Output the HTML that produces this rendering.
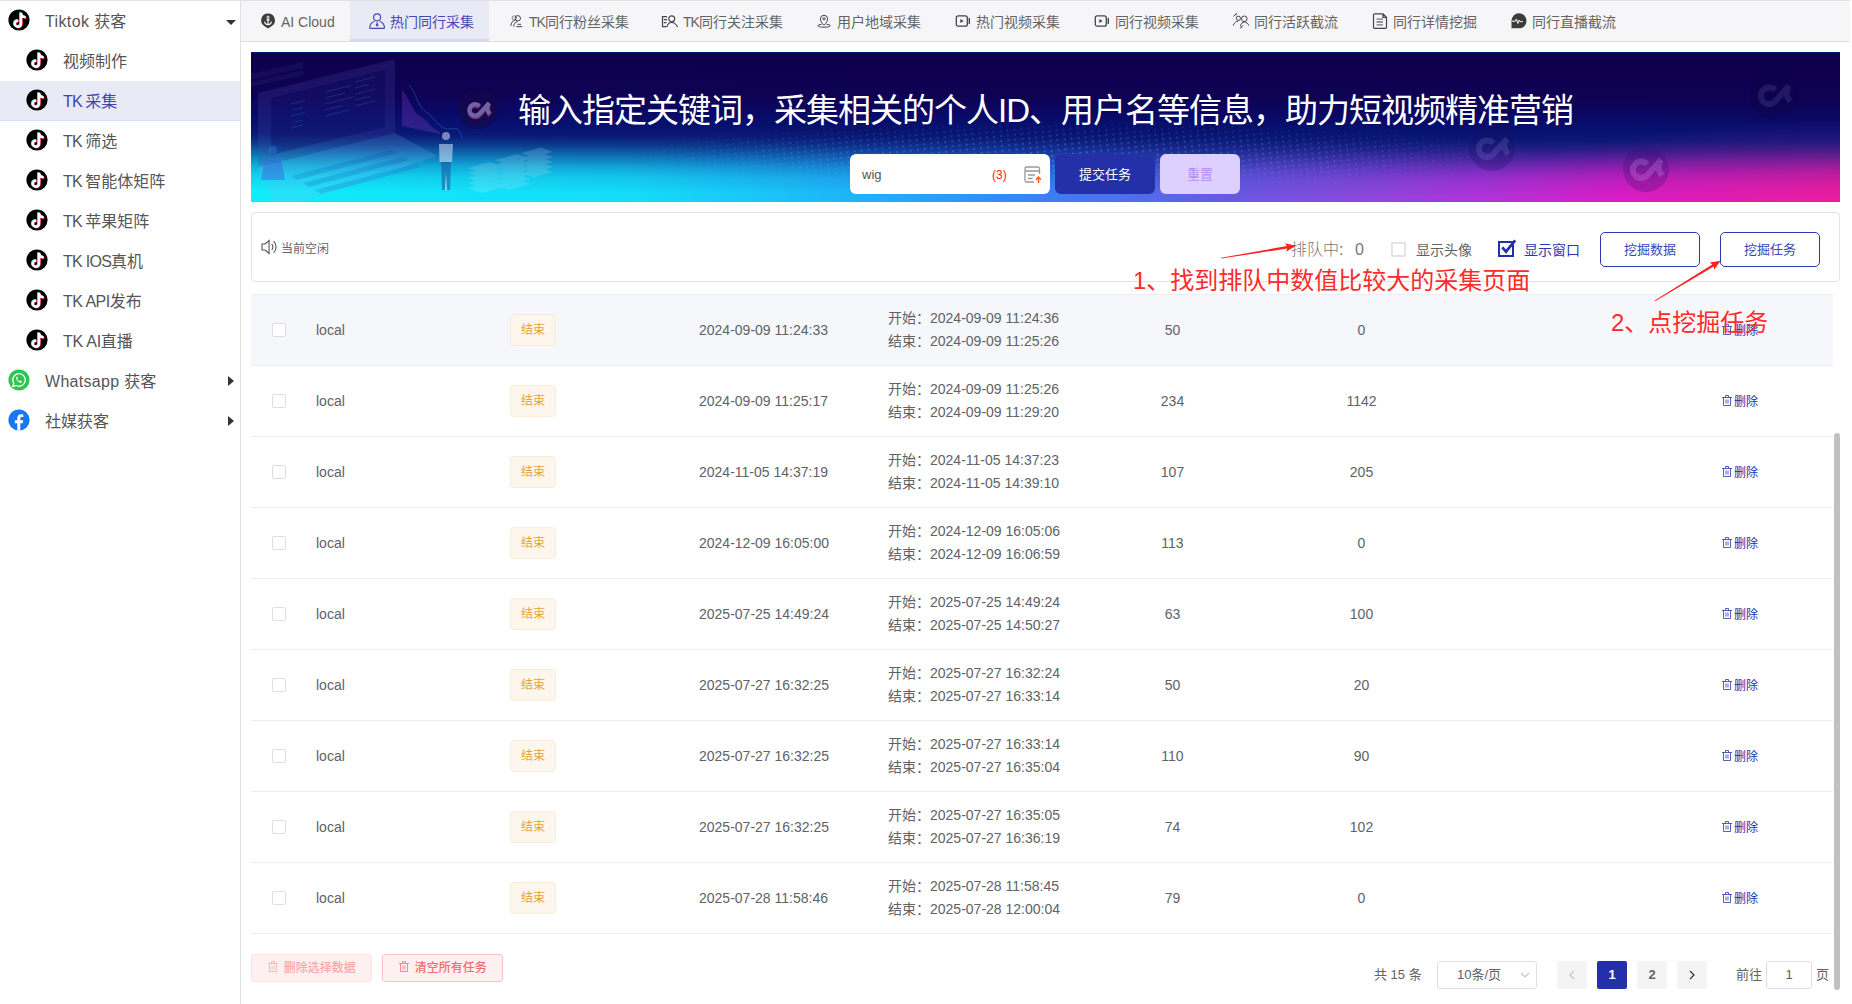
<!DOCTYPE html>
<html lang="zh-CN">
<head>
<meta charset="utf-8">
<title>TK 采集</title>
<style>
*{box-sizing:border-box;margin:0;padding:0}
html,body{width:1852px;height:1004px;overflow:hidden;background:#fff}
body{font-family:"Liberation Sans","Noto Sans CJK SC",sans-serif;color:#606266;position:relative;font-size:14px}
i{font-style:normal;display:block}
b{font-weight:400;display:block}
/* sidebar */
#side{position:absolute;left:0;top:0;width:241px;height:1004px;border-right:1px solid #e0e0e2;border-top:1px solid #e4e4e4;background:#fff}
.mi{position:absolute;left:0;width:240px;height:40px;line-height:42px;font-size:16px;color:#555;white-space:nowrap}
.mi .ic{position:absolute;top:8px;width:22px;height:22px}
.mi .tx{position:absolute;top:0}
.mi.top .ic{left:8px}
.mi.top .tx{left:45px}
.mi.sub .ic{left:26px}
.mi.sub .tx{left:63px}
.mi.act{background:#e8eaf6;color:#3f44b0;border-bottom:1px solid #d9dcf0}
.caret-d{position:absolute;left:226px;top:19px;width:0;height:0;border-left:5px solid transparent;border-right:5px solid transparent;border-top:5px solid #333}
.caret-r{position:absolute;left:228px;top:15px;width:0;height:0;border-top:5px solid transparent;border-bottom:5px solid transparent;border-left:6px solid #333}
/* tabs */
#tabs{position:absolute;left:241px;top:0;width:1609px;height:42px;background:#f6f6f8;border-bottom:1px solid #e0e0e2;border-top:1px solid #e2e2e4}
.tab{position:absolute;top:0;height:40px;line-height:43px;font-size:14px;color:#646464;white-space:nowrap}
.tab svg{position:absolute;top:12px;width:16px;height:16px;color:#444;overflow:visible}
.tab.act{background:#e8eaf6;color:#4549b5;border-bottom:2px solid #d5d9f0}
.tab.act svg{color:#4549b5}
/* banner */
#banner{position:absolute;left:251px;top:52px;width:1589px;height:150px;overflow:hidden;background:#0b0050}
#banner h1{position:absolute;left:0;right:0;top:34.500px;text-align:center;font-weight:400;font-size:33px;letter-spacing:-1px;color:#fff;line-height:48px;white-space:nowrap}
#kw{position:absolute;left:599px;top:102px;width:200px;height:40px;background:#fff;border-radius:6px}
#kw span{position:absolute;line-height:42px}
#sub{position:absolute;left:804px;top:102px;width:100px;height:40px;border-radius:6px;background:#2330a8;color:#fff;font-size:13px;line-height:41px;text-align:center}
#rst{position:absolute;left:909px;top:102px;width:80px;height:40px;border-radius:6px;background:#ddd0ff;color:#b48cf5;font-size:13px;line-height:41px;text-align:center}
/* toolbar */
#tool{position:absolute;left:251px;top:212px;width:1589px;height:70px;border:1px solid #e2e3e6;border-radius:4px;background:#fff}
#tool span{position:absolute;white-space:nowrap}
.obtn{position:absolute;top:19px;width:100px;height:35px;border:1px solid #2b39b0;border-radius:5px;color:#3a46b5;font-size:13px;line-height:33px;text-align:center;background:#fff}
.note{position:absolute;z-index:5;color:#ff2a2a;font-size:24px;line-height:30px;white-space:nowrap}
/* table */
.row{position:absolute;left:251px;width:1582px;height:71px;border-bottom:1px solid #ebeef5;font-size:14px;color:#606266}
.row.hv{background:#f5f7fa}
#tline{position:absolute;left:251px;top:294px;width:1582px;height:1px;background:#ebeef5}
.row span{position:absolute;white-space:nowrap;line-height:20px}
.cb{position:absolute;left:21px;top:28px;width:14px;height:14px;border:1px solid #dcdfe6;border-radius:2px;background:#fff}
.tag{position:absolute;left:259px;top:19px;width:46px;height:32px;line-height:30px;border:1px solid #faecd8;background:#fdf6ec;color:#e6a23c;font-size:12px;text-align:center;border-radius:4px}
.c1{left:65px;top:25px}
.c3{left:448px;top:25px}
.c4a{left:637px;top:13px}
.c4b{left:637px;top:36px}
.c5{left:871.500px;width:100px;text-align:center;top:25px}
.c6{left:1060.500px;width:100px;text-align:center;top:25px}
.del{left:1470px;top:26px;font-size:12px;color:#2330a8}
.tr{display:inline-block;width:12px;height:12px;vertical-align:-1px;margin-right:1px}
.sbar{position:absolute;left:1834px;top:433px;width:6px;height:557px;border-radius:3px;background:#c1c1c1}
/* footer */
.dbtn{position:absolute;top:954px;height:28px;width:121px;border-radius:3px;font-size:12px;font-weight:500;line-height:27px;text-align:center;background:#fef0f0;white-space:nowrap}
#pg span,#pg b,#pg i{position:absolute;white-space:nowrap}
#pg{position:absolute;left:0;top:0;font-size:13px;color:#606266}
.pb{top:961px;width:30px;height:28px;border-radius:2px;background:#f4f4f5;text-align:center;line-height:28px;font-weight:700;font-size:13px;color:#606266}
</style>
</head>
<body>
<div id="side">
<div class="mi top" style="top:0px"><svg class="ic" viewBox="0 0 22 22"><circle cx="11" cy="11" r="10.6" fill="#000"/><g fill="none" stroke-linecap="butt"><path d="M13 3.800v10.900a3.100 3.100 0 1 1-2.800-3.100M13 4.200c.3 2.500 2 4 4.700 4.200" stroke="#25f4ee" stroke-width="2.400" transform="translate(-.7 -.5)"/><path d="M13 3.800v10.900a3.100 3.100 0 1 1-2.800-3.100M13 4.200c.3 2.500 2 4 4.700 4.200" stroke="#fe2c55" stroke-width="2.400" transform="translate(.6 .5)"/><path d="M13 3.800v10.900a3.100 3.100 0 1 1-2.800-3.100M13 4.200c.3 2.500 2 4 4.700 4.200" stroke="#fff" stroke-width="2.400"/></g></svg><span class="tx"><span style="letter-spacing:0.37px">Tiktok </span>获客</span><i class="caret-d"></i></div>
<div class="mi sub" style="top:40px"><svg class="ic" viewBox="0 0 22 22"><circle cx="11" cy="11" r="10.6" fill="#000"/><g fill="none" stroke-linecap="butt"><path d="M13 3.800v10.900a3.100 3.100 0 1 1-2.800-3.100M13 4.200c.3 2.500 2 4 4.700 4.200" stroke="#25f4ee" stroke-width="2.400" transform="translate(-.7 -.5)"/><path d="M13 3.800v10.900a3.100 3.100 0 1 1-2.800-3.100M13 4.200c.3 2.500 2 4 4.700 4.200" stroke="#fe2c55" stroke-width="2.400" transform="translate(.6 .5)"/><path d="M13 3.800v10.900a3.100 3.100 0 1 1-2.800-3.100M13 4.200c.3 2.500 2 4 4.700 4.200" stroke="#fff" stroke-width="2.400"/></g></svg><span class="tx">视频制作</span></div>
<div class="mi sub act" style="top:80px"><svg class="ic" viewBox="0 0 22 22"><circle cx="11" cy="11" r="10.6" fill="#000"/><g fill="none" stroke-linecap="butt"><path d="M13 3.800v10.900a3.100 3.100 0 1 1-2.800-3.100M13 4.200c.3 2.500 2 4 4.700 4.200" stroke="#25f4ee" stroke-width="2.400" transform="translate(-.7 -.5)"/><path d="M13 3.800v10.900a3.100 3.100 0 1 1-2.800-3.100M13 4.200c.3 2.500 2 4 4.700 4.200" stroke="#fe2c55" stroke-width="2.400" transform="translate(.6 .5)"/><path d="M13 3.800v10.900a3.100 3.100 0 1 1-2.800-3.100M13 4.200c.3 2.500 2 4 4.700 4.200" stroke="#fff" stroke-width="2.400"/></g></svg><span class="tx"><span style="letter-spacing:-0.87px">TK </span>采集</span></div>
<div class="mi sub" style="top:120px"><svg class="ic" viewBox="0 0 22 22"><circle cx="11" cy="11" r="10.6" fill="#000"/><g fill="none" stroke-linecap="butt"><path d="M13 3.800v10.900a3.100 3.100 0 1 1-2.800-3.100M13 4.200c.3 2.500 2 4 4.700 4.200" stroke="#25f4ee" stroke-width="2.400" transform="translate(-.7 -.5)"/><path d="M13 3.800v10.900a3.100 3.100 0 1 1-2.800-3.100M13 4.200c.3 2.500 2 4 4.700 4.200" stroke="#fe2c55" stroke-width="2.400" transform="translate(.6 .5)"/><path d="M13 3.800v10.900a3.100 3.100 0 1 1-2.800-3.100M13 4.200c.3 2.500 2 4 4.700 4.200" stroke="#fff" stroke-width="2.400"/></g></svg><span class="tx"><span style="letter-spacing:-0.87px">TK </span>筛选</span></div>
<div class="mi sub" style="top:160px"><svg class="ic" viewBox="0 0 22 22"><circle cx="11" cy="11" r="10.6" fill="#000"/><g fill="none" stroke-linecap="butt"><path d="M13 3.800v10.900a3.100 3.100 0 1 1-2.800-3.100M13 4.200c.3 2.500 2 4 4.700 4.200" stroke="#25f4ee" stroke-width="2.400" transform="translate(-.7 -.5)"/><path d="M13 3.800v10.900a3.100 3.100 0 1 1-2.800-3.100M13 4.200c.3 2.500 2 4 4.700 4.200" stroke="#fe2c55" stroke-width="2.400" transform="translate(.6 .5)"/><path d="M13 3.800v10.900a3.100 3.100 0 1 1-2.800-3.100M13 4.200c.3 2.500 2 4 4.700 4.200" stroke="#fff" stroke-width="2.400"/></g></svg><span class="tx"><span style="letter-spacing:-0.87px">TK </span>智能体矩阵</span></div>
<div class="mi sub" style="top:200px"><svg class="ic" viewBox="0 0 22 22"><circle cx="11" cy="11" r="10.6" fill="#000"/><g fill="none" stroke-linecap="butt"><path d="M13 3.800v10.900a3.100 3.100 0 1 1-2.800-3.100M13 4.200c.3 2.500 2 4 4.700 4.200" stroke="#25f4ee" stroke-width="2.400" transform="translate(-.7 -.5)"/><path d="M13 3.800v10.900a3.100 3.100 0 1 1-2.800-3.100M13 4.200c.3 2.500 2 4 4.700 4.200" stroke="#fe2c55" stroke-width="2.400" transform="translate(.6 .5)"/><path d="M13 3.800v10.900a3.100 3.100 0 1 1-2.800-3.100M13 4.200c.3 2.500 2 4 4.700 4.200" stroke="#fff" stroke-width="2.400"/></g></svg><span class="tx"><span style="letter-spacing:-0.87px">TK </span>苹果矩阵</span></div>
<div class="mi sub" style="top:240px"><svg class="ic" viewBox="0 0 22 22"><circle cx="11" cy="11" r="10.6" fill="#000"/><g fill="none" stroke-linecap="butt"><path d="M13 3.800v10.900a3.100 3.100 0 1 1-2.800-3.100M13 4.200c.3 2.500 2 4 4.700 4.200" stroke="#25f4ee" stroke-width="2.400" transform="translate(-.7 -.5)"/><path d="M13 3.800v10.900a3.100 3.100 0 1 1-2.800-3.100M13 4.200c.3 2.500 2 4 4.700 4.200" stroke="#fe2c55" stroke-width="2.400" transform="translate(.6 .5)"/><path d="M13 3.800v10.900a3.100 3.100 0 1 1-2.800-3.100M13 4.200c.3 2.500 2 4 4.700 4.200" stroke="#fff" stroke-width="2.400"/></g></svg><span class="tx"><span style="letter-spacing:-0.73px">TK IOS</span>真机</span></div>
<div class="mi sub" style="top:280px"><svg class="ic" viewBox="0 0 22 22"><circle cx="11" cy="11" r="10.6" fill="#000"/><g fill="none" stroke-linecap="butt"><path d="M13 3.800v10.900a3.100 3.100 0 1 1-2.800-3.100M13 4.200c.3 2.500 2 4 4.700 4.200" stroke="#25f4ee" stroke-width="2.400" transform="translate(-.7 -.5)"/><path d="M13 3.800v10.900a3.100 3.100 0 1 1-2.800-3.100M13 4.200c.3 2.500 2 4 4.700 4.200" stroke="#fe2c55" stroke-width="2.400" transform="translate(.6 .5)"/><path d="M13 3.800v10.900a3.100 3.100 0 1 1-2.800-3.100M13 4.200c.3 2.500 2 4 4.700 4.200" stroke="#fff" stroke-width="2.400"/></g></svg><span class="tx"><span style="letter-spacing:-0.52px">TK API</span>发布</span></div>
<div class="mi sub" style="top:320px"><svg class="ic" viewBox="0 0 22 22"><circle cx="11" cy="11" r="10.6" fill="#000"/><g fill="none" stroke-linecap="butt"><path d="M13 3.800v10.900a3.100 3.100 0 1 1-2.800-3.100M13 4.200c.3 2.500 2 4 4.700 4.200" stroke="#25f4ee" stroke-width="2.400" transform="translate(-.7 -.5)"/><path d="M13 3.800v10.900a3.100 3.100 0 1 1-2.800-3.100M13 4.200c.3 2.500 2 4 4.700 4.200" stroke="#fe2c55" stroke-width="2.400" transform="translate(.6 .5)"/><path d="M13 3.800v10.900a3.100 3.100 0 1 1-2.800-3.100M13 4.200c.3 2.500 2 4 4.700 4.200" stroke="#fff" stroke-width="2.400"/></g></svg><span class="tx"><span style="letter-spacing:-0.26px">TK AI</span>直播</span></div>
<div class="mi top" style="top:360px"><svg class="ic" viewBox="0 0 22 22"><circle cx="11" cy="11" r="10.6" fill="#2cc64e"/><path d="M11.1 4.6a6.3 6.3 0 0 0-5.4 9.6l-.9 3.2 3.3-.9a6.3 6.3 0 1 0 3-11.9z" fill="none" stroke="#fff" stroke-width="1.3"/><path d="M8.6 7.9c-.3.3-.8.9-.5 1.9.4 1.300 1.600 2.900 3.500 3.700 1 .4 1.600.1 2-.3.300-.3.400-.8.200-1l-1.200-.7c-.3-.1-.5.1-.7.4-.2.3-.4.3-.7.2-.8-.4-1.500-1-1.900-1.800-.1-.3 0-.5.2-.7.200-.2.400-.5.300-.8l-.5-1.100c-.2-.3-.5-.1-.7.200z" fill="#fff"/></svg><span class="tx"><span style="letter-spacing:0.3px">Whatsapp </span>获客</span><i class="caret-r"></i></div>
<div class="mi top" style="top:400px"><svg class="ic" viewBox="0 0 22 22"><circle cx="11" cy="11" r="10.6" fill="#1877f2"/><path d="M12.3 21.500v-7.300h2.500l.4-2.900h-2.900V9.500c0-.9.400-1.500 1.500-1.500h1.500V5.400c-.6-.1-1.400-.2-2.200-.2-2.300 0-3.800 1.400-3.800 3.900v2.200H6.900v2.900h2.400v7.300z" fill="#fff"/></svg><span class="tx">社媒获客</span><i class="caret-r"></i></div>
</div>
<div id="tabs">
<div class="tab " style="left:5px;width:104px"><svg style="left:15px" viewBox="0 0 16 16"><path d="M7.050 .4a6.850 6.850 0 0 1 3.400 12.800L7.050 15.600 3.650 13.200A6.850 6.850 0 0 1 7.050 .4z" fill="#3c3c3c"/><circle cx="7.050" cy="4.300" r="1.150" fill="none" stroke="#fff" stroke-width="1"/><path d="M7.050 5.500v6M3.600 8.600c.3 1.900 1.700 3 3.450 3s3.150-1.100 3.450-3M5.300 7h3.500" fill="none" stroke="#fff" stroke-width="1.100"/></svg><span style="position:absolute;left:35px">AI Cloud</span></div>
<div class="tab act" style="left:109px;width:139px"><svg style="left:19px" viewBox="0 0 16 16" fill="none" stroke="currentColor" stroke-width="1.150"><circle cx="8.100" cy="4.300" r="3.500"/><path d="M.7 15.300c0-3.800 1.700-6 4.800-7.100M15.500 15.300c0-3.800-1.700-6-4.800-7.100M.7 15.300h14.800M8.100 9.300v2"/><circle cx="8.100" cy="12" r=".8"/></svg><span style="position:absolute;left:40px">热门同行采集</span></div>
<div class="tab " style="left:248px;width:155px"><svg style="left:19px" viewBox="0 0 16 16" fill="none" stroke="currentColor" stroke-width="1"><circle cx="9.800" cy="5.300" r="2.700"/><circle cx="6.300" cy="5" r="2.200" stroke-width=".8" opacity=".8"/><path d="M2.800 12.900c.3-3 1.800-5 4.300-6M5.500 13.500c.4-2.500 1.800-4.300 3.900-5M9.500 11.300h3.600M8.300 13.600h5.800"/></svg><span style="position:absolute;left:40px"><span style="letter-spacing:-1px">TK</span>同行粉丝采集</span></div>
<div class="tab " style="left:403px;width:154px"><svg viewBox="0 0 18 16" style="left:17px;width:18px" fill="none" stroke="currentColor" stroke-width="1.200"><path d="M6 3.600H1.500v10H5.500M2.800 6.700H6M2.800 9.600H5.400"/><circle cx="10.700" cy="5.800" r="3"/><path d="M5.900 14c.5-2.700 2.300-4.500 4.800-4.500s4.400 1.800 5.900 4.500"/></svg><span style="position:absolute;left:39px"><span style="letter-spacing:-1px">TK</span>同行关注采集</span></div>
<div class="tab " style="left:557px;width:138px"><svg style="left:18px" viewBox="0 0 16 16" fill="none" stroke="currentColor" stroke-width="1"><path d="M8 12.300C5.800 10 4.400 8 4.400 5.900a3.600 3.600 0 0 1 7.200 0c0 2.100-1.400 4.100-3.600 6.400z"/><circle cx="8" cy="5.800" r="1.100"/><path d="M5.600 11.300C3.400 11.600 2 12.100 2 12.700c0 .9 2.700 1.500 6 1.500s6.300-.6 6.300-1.500c0-.6-1.400-1.100-3.700-1.400"/></svg><span style="position:absolute;left:39px">用户地域采集</span></div>
<div class="tab " style="left:695px;width:139px"><svg style="left:19px" viewBox="0 0 16 16"><rect x="1.300" y="2.800" width="11" height="10.400" rx="2" fill="none" stroke="currentColor" stroke-width="1.300"/><path d="M5.300 6v4l3.400-2z" fill="currentColor"/><path d="M14.300 5.500v5" fill="none" stroke="currentColor" stroke-width="1.400" stroke-linecap="round"/></svg><span style="position:absolute;left:40px">热门视频采集</span></div>
<div class="tab " style="left:834px;width:139px"><svg style="left:19px" viewBox="0 0 16 16"><rect x="1.300" y="2.800" width="11" height="10.400" rx="2" fill="none" stroke="currentColor" stroke-width="1.300"/><path d="M5.300 6v4l3.400-2z" fill="currentColor"/><path d="M14.300 5.500v5" fill="none" stroke="currentColor" stroke-width="1.400" stroke-linecap="round"/></svg><span style="position:absolute;left:40px">同行视频采集</span></div>
<div class="tab " style="left:973px;width:139px"><svg viewBox="0 0 18 16" style="left:18px;width:18px" fill="none" stroke="currentColor" stroke-width="1"><circle cx="6.400" cy="5.300" r="2.100"/><circle cx="12.300" cy="5.800" r="2.800"/><path d="M1.200 12.600c.8-2.600 2.600-4.300 5.200-4.600M8.400 13c.8-2.600 2-3.900 3.900-3.900s3.600 1.200 4.700 3.600M1.500 3.300L4.500 .7M8.700 15l2.500-2.600"/><path d="M4.900 .3L3 .9l1.300 1.500zM8.300 15.400l1.900-.6-1.300-1.500z" fill="currentColor" stroke="none"/></svg><span style="position:absolute;left:40px">同行活跃截流</span></div>
<div class="tab " style="left:1112px;width:139px"><svg style="left:19px" viewBox="0 0 16 16" fill="none" stroke="currentColor" stroke-width="1.200"><path d="M11 .8H2.500a1 1 0 0 0-1 1v12.500a1 1 0 0 0 1 1h11a1 1 0 0 0 1-1V4.300zM11 .8v3.500h3.500"/><path d="M4.500 6.200h6.500M4.500 9h6.500M4.500 11.800h6.500" stroke="#777" stroke-width="1.300"/></svg><span style="position:absolute;left:40px">同行详情挖掘</span></div>
<div class="tab " style="left:1251px;width:139px"><svg viewBox="0 0 18 16" style="left:18px;width:18px"><path d="M1.500 15.300V7.850A7.500 7.500 0 1 1 9 15.350z" fill="#3c3c3c"/><path d="M2 8.200h3.300l1.100-2.100 1.500 4.300 1.300-3.300.9 1.500h2.600" fill="none" stroke="#fff" stroke-width="1"/></svg><span style="position:absolute;left:40px">同行直播截流</span></div>
</div>
<div id="banner">
<svg width="1589" height="150" viewBox="0 0 1589 150" style="position:absolute;left:0;top:0">
<defs>
<linearGradient id="gh" x1="0" y1="0" x2="1" y2="0"><stop offset="0" stop-color="#10ecfa"/><stop offset=".24" stop-color="#14dcf9"/><stop offset=".38" stop-color="#1eb4f8"/><stop offset=".5" stop-color="#3a80f3"/><stop offset=".62" stop-color="#6a58e2"/><stop offset=".7" stop-color="#8a48dc"/><stop offset=".78" stop-color="#b232d8"/><stop offset=".865" stop-color="#d81cc8"/><stop offset=".95" stop-color="#e01cb0"/><stop offset="1" stop-color="#e81ca0"/></linearGradient>
<linearGradient id="gv" gradientUnits="userSpaceOnUse" x1="0" y1="0" x2="-.75" y2="150"><stop offset="0" stop-color="#0f004c"/><stop offset=".28" stop-color="#0e0254"/><stop offset=".38" stop-color="#0a0864"/><stop offset=".47" stop-color="#07106e"/><stop offset=".545" stop-color="#0a1874"/><stop offset=".615" stop-color="#0a1c7a" stop-opacity=".83"/><stop offset=".685" stop-color="#0a1e80" stop-opacity=".56"/><stop offset=".755" stop-color="#0a2088" stop-opacity=".3"/><stop offset=".825" stop-color="#0a2088" stop-opacity=".12"/><stop offset=".925" stop-color="#0a2088" stop-opacity="0"/></linearGradient><radialGradient id="pk" cx="1" cy="1" r="1" gradientTransform="translate(1 1) scale(.22 .55) translate(-1 -1)"><stop offset="0" stop-color="#ec1c9c" stop-opacity=".5"/><stop offset=".5" stop-color="#e01cac" stop-opacity=".22"/><stop offset="1" stop-color="#e01cb8" stop-opacity="0"/></radialGradient>
<pattern id="dots" width="7" height="5" patternUnits="userSpaceOnUse" patternTransform="rotate(-6)"><circle cx="2" cy="2" r=".9" fill="#6fb4ff"/></pattern>
<radialGradient id="dm" cx=".5" cy=".55" r=".5"><stop offset="0" stop-color="#fff" stop-opacity=".5"/><stop offset=".6" stop-color="#fff" stop-opacity=".28"/><stop offset="1" stop-color="#fff" stop-opacity="0"/></radialGradient>
<mask id="dmask"><ellipse cx="820" cy="100" rx="470" ry="36" fill="url(#dm)"/></mask>
</defs>
<rect width="1589" height="150" fill="url(#gh)"/>
<rect width="1589" height="150" fill="url(#gv)"/>
<rect width="1589" height="150" fill="url(#pk)"/>
<rect x="330" y="56" width="980" height="94" fill="url(#dots)" mask="url(#dmask)"/>
<!-- laptop illustration -->
<g opacity=".42">
<path d="M0 22l52-12v6L0 28zM0 30l52-12v5L0 35z" fill="#2a2a78" opacity=".6"/>
<path d="M7 41L144 7v74L7 115z" fill="#4a4aa8" opacity=".55"/>
<path d="M20 46L134 18v57L20 103z" fill="#14146c" opacity=".8"/>
<path d="M7 115l137-34 42 23L50 150H22z" fill="#7fb4f2" opacity=".45"/>
<path d="M40 124l100-26 6 3-100 27zM52 131l100-26 6 3-100 27zM64 138l100-26 6 3-100 27z" fill="#2a5ac8" opacity=".55"/>
<path d="M151 38c8 8 10 22 18 26s10 12 20 16v2l-38-8z" fill="#7a3ac0" opacity=".8"/>
<path d="M158 33c6 6 9 22 17 27s10 12 18 16 14-6 18 10" fill="none" stroke="#3aa0e8" stroke-width=".8"/>
<g stroke="#2ab8e8" stroke-width="1" opacity=".5"><path d="M40 52l14-3.500M42 58l10-2.500M40 64l14-3.500M44 70l8-2M40 76l12-3M74 40l26-6.500M74 46l20-5M74 52l28-7M74 58l18-4.500M74 64l24-6M104 30l20-5M104 36l14-3.500M104 42l20-5M104 48l16-4M104 54l20-5"/></g>
</g>
<circle cx="227" cy="57" r="20" fill="#160848" opacity=".6"/>
<g transform="translate(229 58) rotate(42) scale(1.050)" opacity=".45"><path stroke="#ff4d8a" transform="translate(1 1)" d="M2-11v14a5.500 5.500 0 1 1-5-5.500M2-10.500c.5 4 3.500 6.500 7.500 6.800" fill="none" stroke-width="4" stroke-linecap="butt"/><path stroke="#e8d0ff" d="M2-11v14a5.500 5.500 0 1 1-5-5.500M2-10.500c.5 4 3.500 6.500 7.500 6.800" fill="none" stroke-width="4" stroke-linecap="butt"/></g>
<!-- people + stacks -->
<g opacity=".5">
<path d="M191 84a4 4 0 1 1 8 0a4 4 0 1 1-8 0M188 92h14l-1 18h-4l-.5 28h-3.500l-.5-28h-4z" fill="#e8f0ff"/>
<path d="M190 110h10l-1 28h-3l-1-18-1 18h-3z" fill="#1a4a98"/>
<path d="M18 98a4 4 0 1 1 8 0a4 4 0 1 1-8 0M14 106h16l4 22h-24z" fill="#3a6ae0"/>
<g fill="#d8f2ff" opacity=".34"><path d="M217 116l22-6 14 5-22 6zM217 121l22-6 14 5-22 6zM217 126l22-6 14 5-22 6zM217 131l22-6 14 5-22 6zM217 136l22-6 14 5-22 6z"/><path d="M244 108l22-6 14 5-22 6zM244 113l22-6 14 5-22 6zM244 118l22-6 14 5-22 6zM244 123l22-6 14 5-22 6zM244 128l22-6 14 5-22 6zM244 133l22-6 14 5-22 6z"/><path d="M270 101l20-5.500 12 4.500-20 5.500zM270 106l20-5.500 12 4.500-20 5.500zM270 111l20-5.500 12 4.500-20 5.500zM270 116l20-5.500 12 4.500-20 5.500zM270 121l20-5.500 12 4.500-20 5.500z"/></g>
</g>
<!-- right logos -->
<circle cx="1523" cy="43" r="24" fill="#0a0440" opacity=".25"/>
<g transform="translate(1525 44) rotate(42) scale(1.500)" opacity=".13"><path stroke="#b8a8ff" d="M2-11v14a5.500 5.500 0 1 1-5-5.500M2-10.500c.5 4 3.500 6.500 7.500 6.800" fill="none" stroke-width="4" stroke-linecap="butt"/></g>
<circle cx="1241" cy="96" r="23" fill="#1a1060" opacity=".28"/>
<g transform="translate(1243 97) rotate(42) scale(1.500)" opacity=".15"><path stroke="#c0b8ff" d="M2-11v14a5.500 5.500 0 1 1-5-5.500M2-10.500c.5 4 3.500 6.500 7.500 6.800" fill="none" stroke-width="4" stroke-linecap="butt"/></g>
<circle cx="1395" cy="117" r="23" fill="#3a1070" opacity=".28"/>
<g transform="translate(1397 118) rotate(42) scale(1.500)" opacity=".2"><path stroke="#e8c0ff" d="M2-11v14a5.500 5.500 0 1 1-5-5.500M2-10.500c.5 4 3.500 6.500 7.500 6.800" fill="none" stroke-width="4" stroke-linecap="butt"/></g>
<rect x="0" y="0" width="1589" height="1" fill="#0a1c90" opacity=".8"/>
</svg>
<h1>输入指定关键词，采集相关的个人ID、用户名等信息，助力短视频精准营销</h1>
<div id="kw"><span style="left:12px;font-size:13px;color:#555">wig</span><span style="left:142px;font-size:12px;color:#ff1a1a">(3)</span>
<svg style="position:absolute;left:173px;top:11px" width="20" height="20" viewBox="0 0 20 20" fill="none"><path d="M16.500 9V3.500a1.500 1.500 0 0 0-1.500-1.500H3.500A1.500 1.500 0 0 0 2 3.500v12A1.500 1.500 0 0 0 3.500 17H11" stroke="#999" stroke-width="1.300"/><path d="M2 6h14.500M5 10h7M5 13.500h4.500" stroke="#999" stroke-width="1.300"/><path d="M15.500 18v-5.500M13 14.700l2.500-2.700 2.500 2.700" stroke="#ff5a1f" stroke-width="1.500"/></svg>
</div>
<div id="sub">提交任务</div>
<div id="rst">重置</div>
</div>

<div id="tool">
<svg style="position:absolute;left:9px;top:26px" width="18" height="16" viewBox="0 0 18 16" fill="none" stroke="#555" stroke-width="1.100"><path d="M1 5h3.200L8.100 1.500v13L4.200 11H1z"/><path d="M10.700 4.800c1.600 1.400 1.600 5 0 6.400M12.600 2.300c3.300 2.700 3.300 8.700 0 11.400"/></svg>
<span style="left:29px;top:26.500px;font-size:12px;line-height:18px;color:#666">当前空闲</span>
<span style="left:1039px;top:25px;font-size:16px;line-height:24px;color:#777;font-weight:300">排队中:</span><span style="left:1103px;top:25px;font-size:16px;line-height:24px;color:#777;font-weight:300">0</span>
<i style="position:absolute;left:1139px;top:29px;width:15px;height:15px;border:2px solid #e4e4e4;border-radius:1px;background:#fff"></i>
<span style="left:1164px;top:27px;font-size:14px;line-height:20px;color:#606266">显示头像</span>
<svg style="position:absolute;left:1245px;top:24px" width="22" height="22" viewBox="0 0 22 22" fill="none"><rect x="2" y="5" width="14" height="14" stroke="#2330a8" stroke-width="2"/><path d="M5.300 10.300l3.700 4.300L18.200 3.300" stroke="#2330a8" stroke-width="2.700"/></svg>
<span style="left:1272px;top:27px;font-size:14px;line-height:20px;color:#2b39b0">显示窗口</span>
<b class="obtn" style="left:1348px">挖掘数据</b>
<b class="obtn" style="left:1468px">挖掘任务</b>
</div>
<svg style="position:absolute;z-index:5;left:1200px;top:230px" width="560" height="80" viewBox="0 0 560 80"><g fill="#ff2020"><path d="M21.170 28.600L87.210 18.550 86.100 21.700 95.900 15.800 85 13.300 86.790 15.990 21.030 27.800z"/><path d="M455.100 71.140L513.680 36.600 514.100 39.700 520.700 30.800 509.900 32.500 512.320 34.400 454.700 70.460z"/></g></svg>
<div class="note" style="left:1133px;top:265.700px">1、找到排队中数值比较大的采集页面</div>
<div class="note" style="left:1611px;top:308px">2、点挖掘任务</div>

<div id="table">
<i id="tline"></i>
<div class="row hv" style="top:295px"><i class="cb"></i><span class="c1">local</span><b class="tag">结束</b><span class="c3">2024-09-09 11:24:33</span><span class="c4a">开始：2024-09-09 11:24:36</span><span class="c4b">结束：2024-09-09 11:25:26</span><span class="c5">50</span><span class="c6">0</span><span class="del"><svg class="tr" viewBox="0 0 12 12" fill="none" stroke="currentColor" stroke-width=".9" stroke-opacity=".85"><path d="M1 2.500h10M4.500 2.500v-2h3v2M2.500 2.500v8h7v-8M5 4.500v4M7 4.500v4"/></svg>删除</span></div>
<div class="row" style="top:366px"><i class="cb"></i><span class="c1">local</span><b class="tag">结束</b><span class="c3">2024-09-09 11:25:17</span><span class="c4a">开始：2024-09-09 11:25:26</span><span class="c4b">结束：2024-09-09 11:29:20</span><span class="c5">234</span><span class="c6">1142</span><span class="del"><svg class="tr" viewBox="0 0 12 12" fill="none" stroke="currentColor" stroke-width=".9" stroke-opacity=".85"><path d="M1 2.500h10M4.500 2.500v-2h3v2M2.500 2.500v8h7v-8M5 4.500v4M7 4.500v4"/></svg>删除</span></div>
<div class="row" style="top:437px"><i class="cb"></i><span class="c1">local</span><b class="tag">结束</b><span class="c3">2024-11-05 14:37:19</span><span class="c4a">开始：2024-11-05 14:37:23</span><span class="c4b">结束：2024-11-05 14:39:10</span><span class="c5">107</span><span class="c6">205</span><span class="del"><svg class="tr" viewBox="0 0 12 12" fill="none" stroke="currentColor" stroke-width=".9" stroke-opacity=".85"><path d="M1 2.500h10M4.500 2.500v-2h3v2M2.500 2.500v8h7v-8M5 4.500v4M7 4.500v4"/></svg>删除</span></div>
<div class="row" style="top:508px"><i class="cb"></i><span class="c1">local</span><b class="tag">结束</b><span class="c3">2024-12-09 16:05:00</span><span class="c4a">开始：2024-12-09 16:05:06</span><span class="c4b">结束：2024-12-09 16:06:59</span><span class="c5">113</span><span class="c6">0</span><span class="del"><svg class="tr" viewBox="0 0 12 12" fill="none" stroke="currentColor" stroke-width=".9" stroke-opacity=".85"><path d="M1 2.500h10M4.500 2.500v-2h3v2M2.500 2.500v8h7v-8M5 4.500v4M7 4.500v4"/></svg>删除</span></div>
<div class="row" style="top:579px"><i class="cb"></i><span class="c1">local</span><b class="tag">结束</b><span class="c3">2025-07-25 14:49:24</span><span class="c4a">开始：2025-07-25 14:49:24</span><span class="c4b">结束：2025-07-25 14:50:27</span><span class="c5">63</span><span class="c6">100</span><span class="del"><svg class="tr" viewBox="0 0 12 12" fill="none" stroke="currentColor" stroke-width=".9" stroke-opacity=".85"><path d="M1 2.500h10M4.500 2.500v-2h3v2M2.500 2.500v8h7v-8M5 4.500v4M7 4.500v4"/></svg>删除</span></div>
<div class="row" style="top:650px"><i class="cb"></i><span class="c1">local</span><b class="tag">结束</b><span class="c3">2025-07-27 16:32:25</span><span class="c4a">开始：2025-07-27 16:32:24</span><span class="c4b">结束：2025-07-27 16:33:14</span><span class="c5">50</span><span class="c6">20</span><span class="del"><svg class="tr" viewBox="0 0 12 12" fill="none" stroke="currentColor" stroke-width=".9" stroke-opacity=".85"><path d="M1 2.500h10M4.500 2.500v-2h3v2M2.500 2.500v8h7v-8M5 4.500v4M7 4.500v4"/></svg>删除</span></div>
<div class="row" style="top:721px"><i class="cb"></i><span class="c1">local</span><b class="tag">结束</b><span class="c3">2025-07-27 16:32:25</span><span class="c4a">开始：2025-07-27 16:33:14</span><span class="c4b">结束：2025-07-27 16:35:04</span><span class="c5">110</span><span class="c6">90</span><span class="del"><svg class="tr" viewBox="0 0 12 12" fill="none" stroke="currentColor" stroke-width=".9" stroke-opacity=".85"><path d="M1 2.500h10M4.500 2.500v-2h3v2M2.500 2.500v8h7v-8M5 4.500v4M7 4.500v4"/></svg>删除</span></div>
<div class="row" style="top:792px"><i class="cb"></i><span class="c1">local</span><b class="tag">结束</b><span class="c3">2025-07-27 16:32:25</span><span class="c4a">开始：2025-07-27 16:35:05</span><span class="c4b">结束：2025-07-27 16:36:19</span><span class="c5">74</span><span class="c6">102</span><span class="del"><svg class="tr" viewBox="0 0 12 12" fill="none" stroke="currentColor" stroke-width=".9" stroke-opacity=".85"><path d="M1 2.500h10M4.500 2.500v-2h3v2M2.500 2.500v8h7v-8M5 4.500v4M7 4.500v4"/></svg>删除</span></div>
<div class="row" style="top:863px"><i class="cb"></i><span class="c1">local</span><b class="tag">结束</b><span class="c3">2025-07-28 11:58:46</span><span class="c4a">开始：2025-07-28 11:58:45</span><span class="c4b">结束：2025-07-28 12:00:04</span><span class="c5">79</span><span class="c6">0</span><span class="del"><svg class="tr" viewBox="0 0 12 12" fill="none" stroke="currentColor" stroke-width=".9" stroke-opacity=".85"><path d="M1 2.500h10M4.500 2.500v-2h3v2M2.500 2.500v8h7v-8M5 4.500v4M7 4.500v4"/></svg>删除</span></div>
<i class="sbar"></i>
</div>
<div id="foot">
<b class="dbtn" style="left:251px;border:1px solid #fde2e2;color:#f9a7a7"><svg class="tr" viewBox="0 0 12 12" fill="none" stroke="currentColor" stroke-width=".9" stroke-opacity=".85"><path d="M1 2.500h10M4.500 2.500v-2h3v2M2.500 2.500v8h7v-8M5 4.500v4M7 4.500v4"/></svg> 删除选择数据</b>
<b class="dbtn" style="left:382px;border:1px solid #fbc4c4;color:#f56c6c"><svg class="tr" viewBox="0 0 12 12" fill="none" stroke="currentColor" stroke-width=".9" stroke-opacity=".85"><path d="M1 2.500h10M4.500 2.500v-2h3v2M2.500 2.500v8h7v-8M5 4.500v4M7 4.500v4"/></svg> 清空所有任务</b>
<div id="pg">
<span style="left:1374px;top:965px;line-height:20px">共 15 条</span>
<i style="left:1437px;top:961px;width:100px;height:28px;border:1px solid #dcdfe6;border-radius:3px;background:#fff"></i>
<span style="left:1457px;top:965px;line-height:20px">10条/页</span>
<svg style="position:absolute;left:1519px;top:970px" width="12" height="10" viewBox="0 0 12 10" fill="none" stroke="#c0c4cc" stroke-width="1.100"><path d="M2 3l4 4 4-4"/></svg>
<b class="pb" style="left:1557px"><svg width="10" height="12" viewBox="0 0 10 12" fill="none" stroke="#c0c4cc" stroke-width="1.200" style="vertical-align:-2px"><path d="M7 2L3 6l4 4"/></svg></b>
<b class="pb" style="left:1597px;background:#2330a8;color:#fff">1</b>
<b class="pb" style="left:1637px">2</b>
<b class="pb" style="left:1677px"><svg width="10" height="12" viewBox="0 0 10 12" fill="none" stroke="#303133" stroke-width="1.200" style="vertical-align:-2px"><path d="M3 2l4 4-4 4"/></svg></b>
<span style="left:1736px;top:965px;line-height:20px">前往</span>
<i style="left:1766px;top:961px;width:46px;height:28px;border:1px solid #dcdfe6;border-radius:3px;background:#fff;text-align:center;line-height:26px">1</i>
<span style="left:1816px;top:965px;line-height:20px">页</span>
</div>
</div>

</body>
</html>
